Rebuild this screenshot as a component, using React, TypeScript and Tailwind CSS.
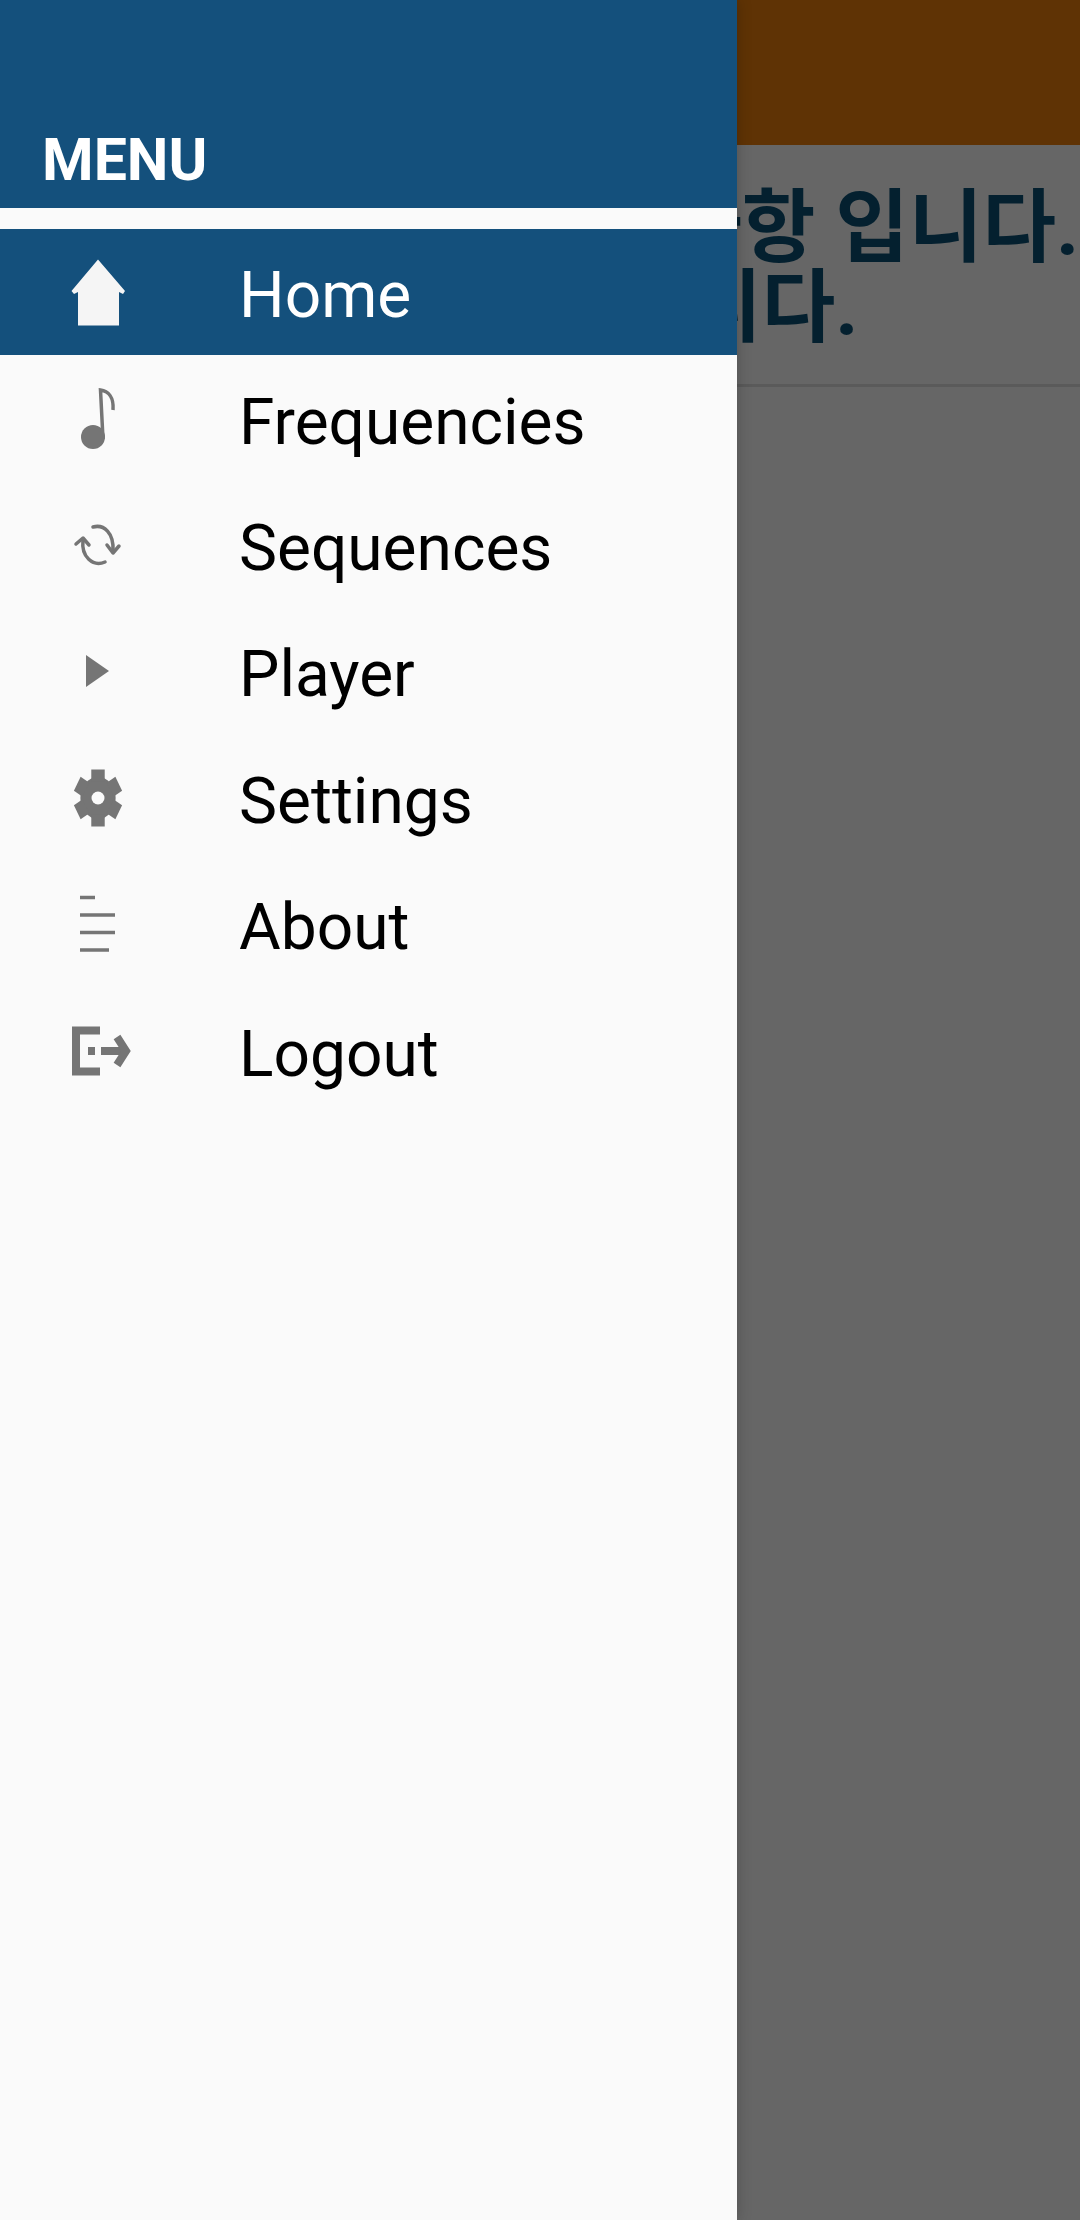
const font = { fontFamily: '"Roboto", "Noto Sans CJK KR", sans-serif' };

const Icon = ({ children }: { children: React.ReactNode }) => (
	<svg viewBox="48 -50 100 100" className="w-[100px] h-[100px] shrink-0 ml-[48px]">
		{children}
	</svg>
);

const gray = "#757575";

const HomeIcon = () => (
	<Icon>
		<path d="M98 -32.5 L125 -1 L123 2 L119 0 V33.5 H78 V0 L74 2 L71.5 -1 Z" fill="#f5f5f5" />
	</Icon>
);

const NoteIcon = () => (
	<Icon>
		<circle cx="93" cy="18" r="12" fill={gray} />
		<path d="M103 20 L100.5 -29 C108 -28 114 -22 113 -9" fill="none" stroke={gray} strokeWidth="3.5" />
	</Icon>
);

const SyncIcon = () => (
	<Icon>
		<g fill="none" stroke={gray} strokeWidth="3.5" strokeLinecap="round" strokeLinejoin="round">
			<path d="M93 -18 C104 -21 114 -12 113 6" />
			<path d="M107 0 L113 8 L119 1" />
			<path d="M105 17 C93 22 81 12 83 -5" />
			<path d="M76 -1 L83 -7 L89 0" />
		</g>
	</Icon>
);

const PlayIcon = () => (
	<Icon>
		<path d="M86 -16 L109 0 L86 16 Z" fill={gray} />
	</Icon>
);

const GearIcon = () => (
	<Icon>
		<g fill={gray} transform="translate(98 0) scale(0.84 1) translate(-98 0)">
			<circle cx="98" cy="0" r="21" />
			{[0, 60, 120, 180, 240, 300].map((a) => (
				<rect key={a} x="90" y="-28.5" width="16" height="12" transform={`rotate(${a} 98 0)`} />
			))}
		</g>
		<circle cx="98" cy="0" r="6.5" fill="#fafafa" />
	</Icon>
);

const AboutIcon = () => (
	<Icon>
		<g stroke={gray} strokeWidth="3.5">
			<path d="M80 -26.5 H95" />
			<path d="M80 -9 H115" />
			<path d="M80 8.5 H115" />
			<path d="M80 26 H109" />
		</g>
	</Icon>
);

const LogoutIcon = () => (
	<Icon>
		<g fill="none" stroke={gray} strokeWidth="8">
			<path d="M100 -20.5 H76 V20.5 H100" />
			<path d="M101 0 H124" />
			<path d="M117 -14 L126 0 L117 14" />
		</g>
		<rect x="88" y="-4" width="7" height="8" fill={gray} />
	</Icon>
);

const items = [
	{ label: "Home", icon: <HomeIcon /> },
	{ label: "Frequencies", icon: <NoteIcon /> },
	{ label: "Sequences", icon: <SyncIcon /> },
	{ label: "Player", icon: <PlayIcon /> },
	{ label: "Settings", icon: <GearIcon /> },
	{ label: "About", icon: <AboutIcon /> },
	{ label: "Logout", icon: <LogoutIcon /> },
];

export default function App() {
	return (
		<div className="relative w-[1080px] h-[2220px] overflow-hidden bg-[#666666]">
			{/* page behind the drawer */}
			<div className="h-[145px] bg-[#5f3305]"></div>
			<div
				className="h-[242px] border-b-[3px] border-[#5a5a5a] pt-[43px] pl-[521px] text-[80px] leading-[80px] font-bold text-[#04202f] whitespace-nowrap"
				style={font}
			>
				<p>공지사항 입니다.</p>
				<p>잘 됩니다.</p>
			</div>

			{/* drawer */}
			<aside className="absolute inset-y-0 left-0 w-[737px] bg-[#fafafa] font-['Roboto',sans-serif] shadow-[0_0_14px_rgba(0,0,0,0.22)]">
				<div className="h-[208px] bg-[#14507c] flex items-end pl-[42px] pb-[15px]">
					<span className="text-[59px] leading-[66px] font-bold text-white">MENU</span>
				</div>
				<nav className="pt-[21px]">
					{items.map((item, i) => (
						<div
							key={item.label}
							className={`h-[126.4px] flex items-center ${i === 0 ? "bg-[#14507c] text-white" : "text-black"}`}
						>
							{item.icon}
							<span className="ml-[91px] pt-[8px] text-[64px] leading-none">{item.label}</span>
						</div>
					))}
				</nav>
			</aside>
		</div>
	);
}
